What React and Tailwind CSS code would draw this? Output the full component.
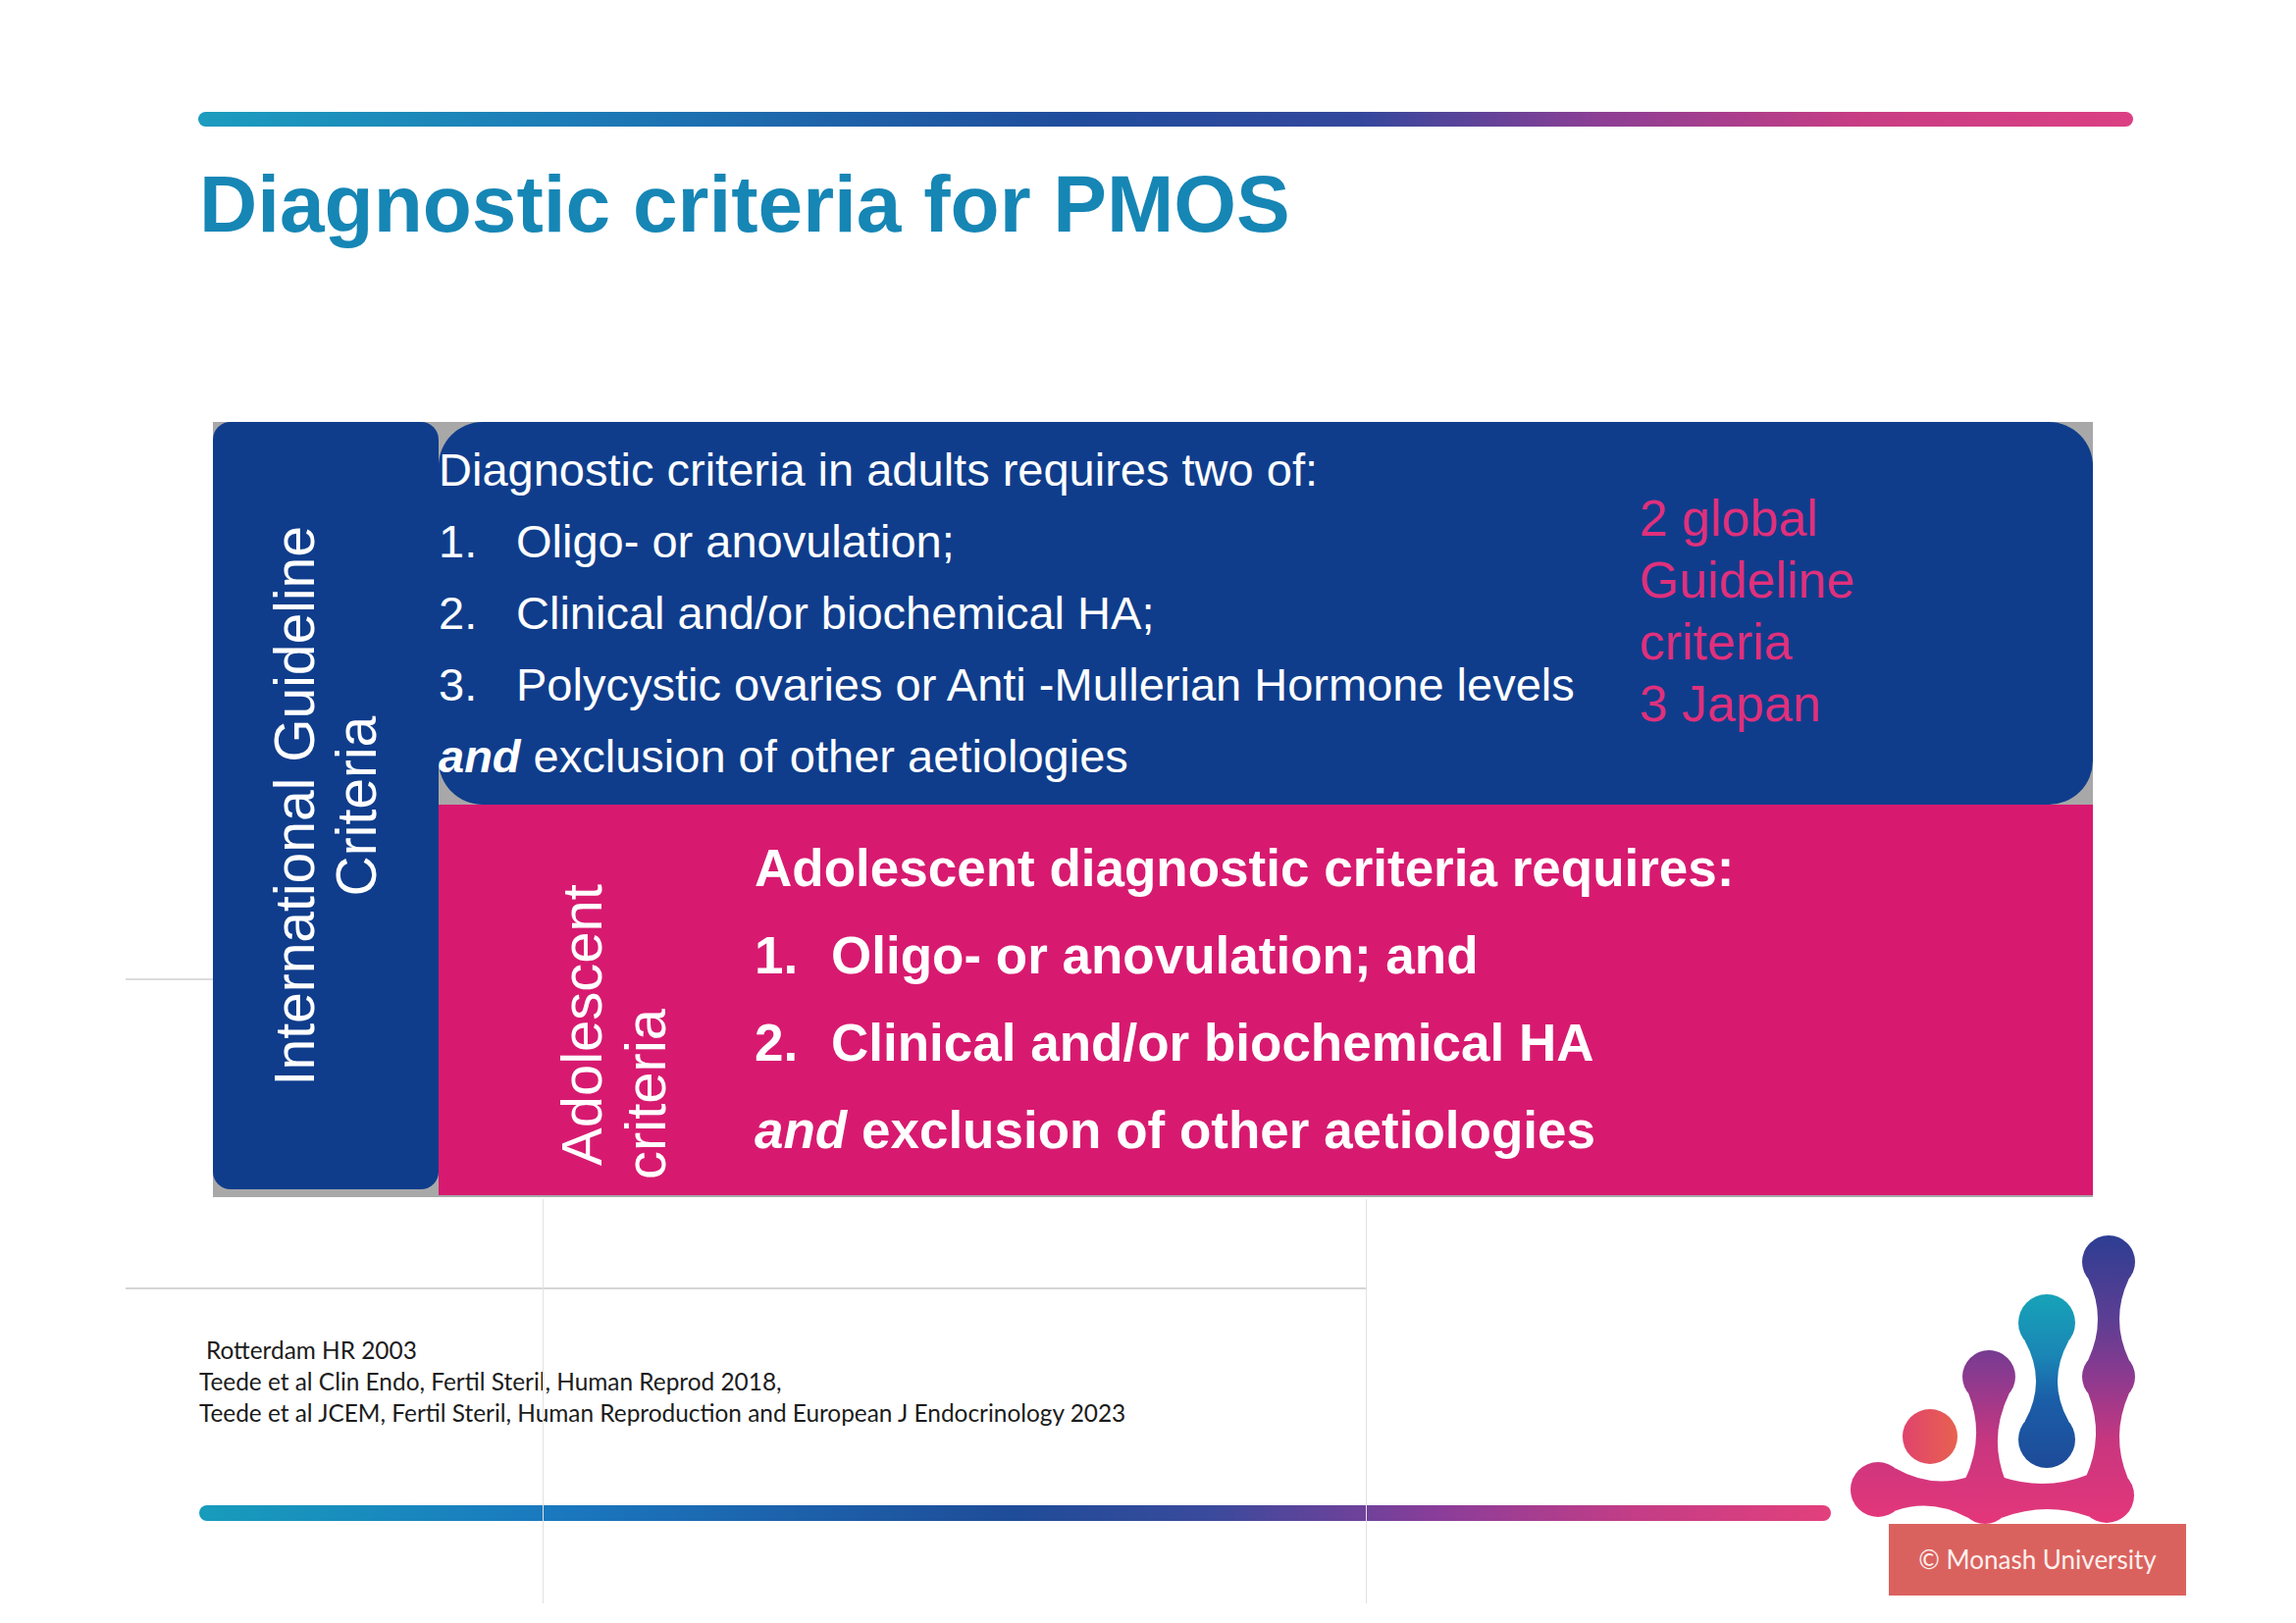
import React from "react";

function vNeck(x1, y1, r1, x2, y2, r2, n) {
  const s = 0.766, c = 0.643;
  const xm = (x1 + x2) / 2, ym = (y1 + y2) / 2;
  const cc = 2 * n - 0.5 * (r1 + r2) * s;
  return `M${x1 - r1 * s},${y1 + r1 * c} Q${xm - cc},${ym} ${x2 - r2 * s},${y2 - r2 * c} L${x2 + r2 * s},${y2 - r2 * c} Q${xm + cc},${ym} ${x1 + r1 * s},${y1 + r1 * c} Z`;
}
function hNeck(x1, y1, r1, x2, y2, r2, n) {
  const s = 0.766, c = 0.643;
  const xm = (x1 + x2) / 2, ym = (y1 + y2) / 2;
  const cc = 2 * n - 0.5 * (r1 + r2) * s;
  return `M${x1 + r1 * c},${y1 - r1 * s} Q${xm},${ym - cc} ${x2 - r2 * c},${y2 - r2 * s} L${x2 - r2 * c},${y2 + r2 * s} Q${xm},${ym + cc} ${x1 + r1 * c},${y1 + r1 * s} Z`;
}

function Logo() {
  const A = [279, 36, 27], B = [279, 153, 27], C = [277, 274, 28];
  const D = [216, 98, 29], E = [216, 217, 29];
  const F = [157, 153, 27], G = [153, 276, 27], H = [44, 268, 28];
  const I = [97, 214, 28];
  return (
    <svg className="block" width="370" height="303" viewBox="0 0 370 303">
      <defs>
        <linearGradient id="lgMain" gradientUnits="userSpaceOnUse" x1="0" y1="5" x2="0" y2="303">
          <stop offset="0" stopColor="#2b3e93" />
          <stop offset="0.3" stopColor="#5c3e93" />
          <stop offset="0.5" stopColor="#8d3a8f" />
          <stop offset="0.72" stopColor="#c8367f" />
          <stop offset="1" stopColor="#e5367a" />
        </linearGradient>
        <linearGradient id="lgTeal" gradientUnits="userSpaceOnUse" x1="0" y1="68" x2="0" y2="248">
          <stop offset="0" stopColor="#17a3b8" />
          <stop offset="0.35" stopColor="#1a86b5" />
          <stop offset="0.6" stopColor="#1b5ea8" />
          <stop offset="1" stopColor="#1d4a98" />
        </linearGradient>
        <linearGradient id="lgCoral" gradientUnits="userSpaceOnUse" x1="70" y1="0" x2="126" y2="0">
          <stop offset="0" stopColor="#e0446c" />
          <stop offset="1" stopColor="#e8624f" />
        </linearGradient>
      </defs>
      <g fill="url(#lgMain)">
        {[A, B, C, F, G, H].map((p, i) => (
          <circle key={i} cx={p[0]} cy={p[1]} r={p[2]} />
        ))}
        <path d={vNeck(...A, ...B, 11)} />
        <path d={vNeck(...B, ...C, 12)} />
        <path d={vNeck(...F, ...G, 11)} />
        <path d={hNeck(...H, ...G, 13)} />
        <path d={hNeck(...G, ...C, 13)} />
      </g>
      <g fill="url(#lgTeal)">
        <circle cx={D[0]} cy={D[1]} r={D[2]} />
        <circle cx={E[0]} cy={E[1]} r={E[2]} />
        <path d={vNeck(...D, ...E, 11)} />
      </g>
      <circle cx={I[0]} cy={I[1]} r={I[2]} fill="url(#lgCoral)" />
    </svg>
  );
}

export default function App() {
  return (
    <div className="relative w-[2340px] h-[1654px] bg-white overflow-hidden font-['Liberation_Sans',Arial,sans-serif]">
      {/* top gradient rule */}
      <div className="ml-[202px] mt-[114px] w-[1972px] h-[15px] rounded-full bg-[linear-gradient(90deg,#1c9cbf_0%,#1c7ab6_20%,#1f4c9c_45%,#33479c_60%,#8a3f95_72%,#c83d84_86%,#db4083_100%)]" />

      <h1 className="ml-[203px] mt-[38px] text-[82px] leading-[82px] font-bold text-[#1686b5]">
        Diagnostic criteria for PMOS
      </h1>

      {/* main diagram */}
      <div className="ml-[217px] mt-[181px] w-[1916px] h-[790px] bg-[#a8a8a8] flex">
        <div className="w-[230px] h-[782px] rounded-[18px] bg-[#0f3d8c] flex items-center justify-center">
          <div className="[writing-mode:vertical-rl] rotate-180 text-center text-white text-[57px] leading-[63px] whitespace-nowrap">
            International Guideline
            <br />
            Criteria
          </div>
        </div>

        <div className="flex-1 flex flex-col">
          <div className="h-[390px] rounded-[45px] bg-[#0f3d8c] pt-[12px] flex text-white">
            <div className="w-[1224px] text-[47px] leading-[73px] whitespace-nowrap">
              <p>Diagnostic criteria in adults requires two of:</p>
              <p className="flex"><span className="w-[79px]">1.</span><span>Oligo- or anovulation;</span></p>
              <p className="flex"><span className="w-[79px]">2.</span><span>Clinical and/or biochemical HA;</span></p>
              <p className="flex"><span className="w-[79px]">3.</span><span>Polycystic ovaries or Anti -Mullerian Hormone levels</span></p>
              <p><b className="italic font-bold">and</b> exclusion of other aetiologies</p>
            </div>
            <div className="mt-[55px] text-[52px] leading-[63px] text-[#e0307c] whitespace-nowrap">
              <p>2 global</p>
              <p>Guideline</p>
              <p>criteria</p>
              <p>3 Japan</p>
            </div>
          </div>

          <div className="flex-1 mb-[2px] bg-[#d71a70] flex text-white">
            <div className="ml-[113px] [writing-mode:vertical-rl] rotate-180 text-[58px] leading-[65px] whitespace-nowrap">
              <div className="ps-[30px]">Adolescent</div>
              <div className="ps-[16px]">criteria</div>
            </div>
            <div className="ml-[79px] pt-[20px] font-bold text-[53px] leading-[89px] whitespace-nowrap">
              <p>Adolescent diagnostic criteria requires:</p>
              <p className="flex"><span className="w-[78px]">1.</span><span>Oligo- or anovulation; and</span></p>
              <p className="flex"><span className="w-[78px]">2.</span><span>Clinical and/or biochemical HA</span></p>
              <p><i>and</i> exclusion of other aetiologies</p>
            </div>
          </div>
        </div>
      </div>

      {/* bottom section */}
      <div className="mt-[30px] flex">
        <div className="ml-[203px] w-[1663px] flex flex-col">
          <div className="mt-[110px] font-['Lato',sans-serif] text-[24.4px] leading-[32px] text-[#1c1c1c]">
            <p className="pl-[7px]">Rotterdam HR 2003</p>
            <p>Teede et al Clin Endo, Fertil Steril, Human Reprod 2018,</p>
            <p>Teede et al JCEM, Fertil Steril, Human Reproduction and European J Endocrinology 2023</p>
          </div>
          <div className="mt-[78px] h-[16px] rounded-full bg-[linear-gradient(90deg,#189cbc_0%,#1a78bf_22%,#1f4c98_50%,#3a4a9c_62%,#8a3d99_76%,#c43d86_88%,#e2407c_100%)]" />
        </div>
        <div className="ml-[4px] flex flex-col">
          <Logo />
          <div className="ml-[55px] w-[303px] h-[73px] bg-[#da625e] flex items-center justify-center text-[#fdf0ee] text-[26px] font-['Lato',sans-serif]">
            © Monash University
          </div>
        </div>
      </div>

      {/* faint scan lines */}
      <div className="absolute left-[128px] top-[1312px] w-[1264px] h-[2px] bg-[#d6d6d6]" />
      <div className="absolute left-[553px] top-[1222px] w-[1px] h-[412px] bg-[#e2e2e2]" />
      <div className="absolute left-[1392px] top-[1222px] w-[1px] h-[412px] bg-[#e2e2e2]" />
      <div className="absolute left-[128px] top-[997px] w-[89px] h-[2px] bg-[#dcdcdc]" />
    </div>
  );
}
